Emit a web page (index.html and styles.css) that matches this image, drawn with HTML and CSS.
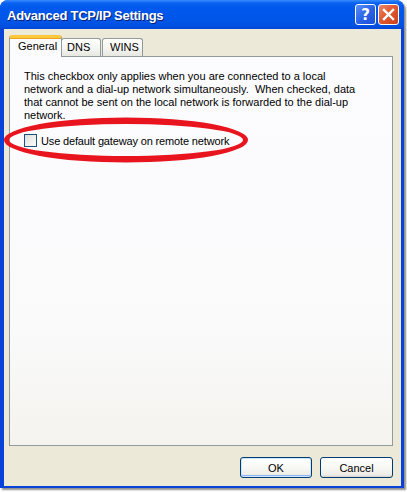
FILE: index.html
```html
<!DOCTYPE html>
<html>
<head>
<meta charset="utf-8">
<link rel="stylesheet" href="styles.css">
</head>
<body>
<div class="window">
  <div class="titlebar">
    <span class="title">Advanced TCP/IP Settings</span>
    <div class="caption-buttons">
      <div class="cbtn help">?</div>
      <div class="cbtn close">
        <svg width="13" height="13" viewBox="0 0 13 13"><path d="M2 2 L11 11 M11 2 L2 11" stroke="#fff" stroke-width="2.4" stroke-linecap="square"/></svg>
      </div>
    </div>
  </div>
  <div class="client">
    <div class="tabs">
      <div class="tab active">General</div>
      <div class="tab">DNS</div>
      <div class="tab">WINS</div>
    </div>
    <div class="panel">
      <p class="desc">This checkbox only applies when you are connected to a local network and a dial-up network simultaneously.&nbsp; When checked, data that cannot be sent on the local network is forwarded to the dial-up network.</p>
      <label class="check-row"><span class="checkbox"></span><span class="check-label">Use default gateway on remote network</span></label>
    </div>
    <div class="buttons">
      <div class="btn default">OK</div>
      <div class="btn">Cancel</div>
    </div>
  </div>
  <svg class="annotation" width="260" height="60" viewBox="0 0 260 60">
    <path fill="#e8151f" fill-rule="evenodd" d="M4 23 A122 22.5 0 1 0 248 23 A122 22.5 0 1 0 4 23 Z M9 23 A117 16 0 1 0 243 23 A117 16 0 1 0 9 23 Z"/>
  </svg>
</div>
</body>
</html>
```
FILE: styles.css
```css
* { box-sizing: border-box; }
html, body { margin: 0; padding: 0; background: #fff; }
body { width: 407px; height: 492px; overflow: hidden; }

.window {
  position: relative;
  width: 404px;
  height: 488px;
  display: flex;
  flex-direction: column;
  background: #0842d8;
  border-radius: 8px 8px 0 0;
  box-shadow: 2px 2px 2px rgba(0,0,0,0.45);
  font-family: "Liberation Sans", Arial, sans-serif;
  font-size: 11px;
  color: #000;
}

.titlebar {
  height: 29px;
  flex: none;
  display: flex;
  align-items: center;
  justify-content: space-between;
  padding: 0 5px 0 7px;
  border-radius: 8px 8px 0 0;
  background: linear-gradient(to bottom, #3a8cff 0px, #0a62f0 3px, #0058ee 8px, #0055e8 20px, #0050e0 26px, #0046d6 29px);
}
.title {
  color: #fff;
  font-weight: bold;
  font-size: 13px;
  font-family: "Liberation Sans", Arial, sans-serif;
  letter-spacing: -0.25px;
  text-shadow: 1px 1px 0 #0a1e6e;
  padding-top: 1px;
}
.caption-buttons { display: flex; gap: 2px; }
.cbtn {
  width: 21px;
  height: 21px;
  border: 1px solid #fff;
  border-radius: 3px;
  display: flex;
  align-items: center;
  justify-content: center;
  color: #fff;
}
.help {
  background: linear-gradient(135deg, #5c8ff6 0%, #2c64e8 50%, #1a4fd6 100%);
  font-family: "DejaVu Sans", sans-serif;
  font-weight: bold;
  font-size: 15px;
}
.close {
  background: linear-gradient(135deg, #e8876a 0%, #e15a33 45%, #c8401c 100%);
}

.client {
  flex: 1;
  margin: 0 3px 4px 4px;
  background: #ece9d8;
  padding: 6px 8px 8px 5px;
  display: flex;
  flex-direction: column;
}

.tabs {
  display: flex;
  height: 21px;
  align-items: flex-end;
  position: relative;
  z-index: 2;
}
.tab {
  height: 18px;
  padding: 0 8px;
  border: 1px solid #919b9c;
  border-bottom: none;
  border-radius: 3px 3px 0 0;
  background: linear-gradient(to bottom, #fff 0%, #f6f6f3 50%, #e8e8e2 100%);
  line-height: 16px;
  margin-left: -1px;
}
.tab:nth-child(3) { margin-left: 1px; }
.tab.active {
  margin-left: 0;
  padding: 0 8px;
  width: 53px;
  background: #fcfcfe;
  border-top: 3px solid #ffc83c;
  border-radius: 3px 3px 0 0;
  box-shadow: inset 0 1px 0 #e8a420;
  line-height: 17px;
  height: 22px;
  margin-bottom: -1px;
  position: relative;
}
.tab:nth-child(2) { width: 40px; padding: 0 0 0 5px; }
.tab:nth-child(3) { width: 41px; padding: 0 0 0 7px; }

.panel {
  flex: none;
  height: 390px;
  width: 384px;
  border: 1px solid #919b9c;
  background: linear-gradient(to bottom, #fcfcfe 0%, #fafafb 70%, #f4f3ee 100%);
  padding: 13px 14px 0 14px;
}
.desc {
  margin: 0;
  line-height: 13px;
  width: 340px;
}
.check-row {
  display: flex;
  align-items: center;
  gap: 4px;
  margin-top: 12px;
}
.check-label { letter-spacing: -0.15px; }
.checkbox {
  width: 13px;
  height: 13px;
  border: 1px solid #1c5180;
  background: linear-gradient(135deg, #dcdcd7 0%, #efefec 55%, #fbfbfa 100%);
}

.buttons {
  display: flex;
  justify-content: flex-end;
  gap: 8px;
  margin-top: 11px;
}
.btn {
  width: 73px;
  height: 21px;
  border: 1px solid #003c74;
  border-radius: 3px;
  background: linear-gradient(to bottom, #ffffff 0%, #f8f8f5 50%, #ecebe6 90%, #d6d0c5 100%);
  display: flex;
  align-items: center;
  justify-content: center;
}
.btn.default {
  width: 72px;
  box-shadow: inset 0 0 0 1px #cee7ff, inset 0 -1px 0 1px #8cb4f2;
}

.annotation {
  position: absolute;
  left: 0;
  top: 117px;
}
```
